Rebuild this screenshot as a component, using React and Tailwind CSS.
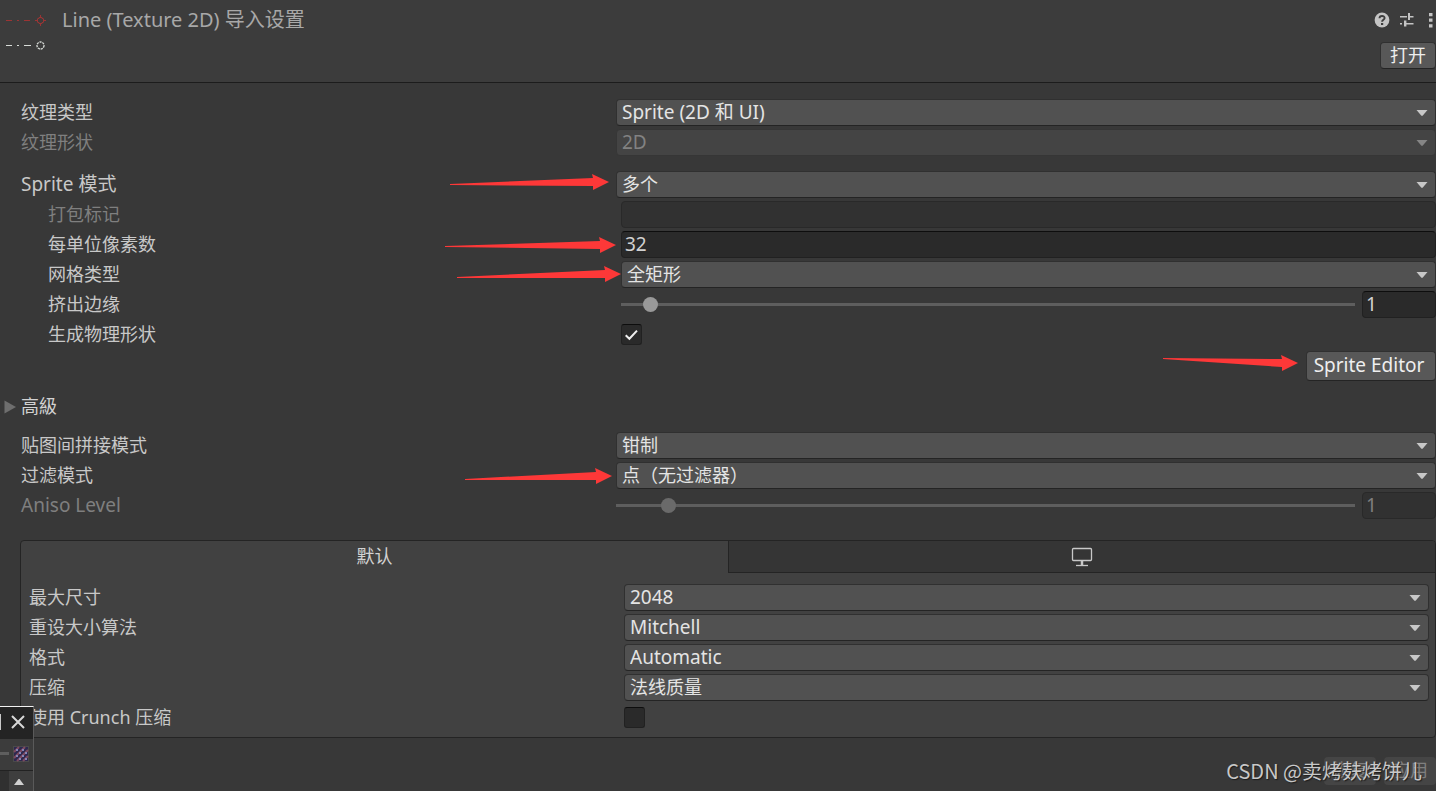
import React, { useId } from "react";

const BOX = "h-[27px] rounded-[4px] border leading-6";

// Strings that open with Latin letters or digits are set slightly larger.
function textSize(text) {
  return /^[\x20-\x7e]/.test(text) ? "text-[19px] " : "text-[18px] ";
}

function Caret({ dim }) {
  return (
    <svg
      viewBox="0 0 12 6"
      className={
        "pointer-events-none mr-2 h-[6px] w-3 self-center justify-self-end [grid-area:1/1] " +
        (dim ? "fill-[#858585]" : "fill-[#c8c8c8]")
      }
      aria-hidden="true"
    >
      <path d="M0.5 0h11L6.6 5.7H5.4z" />
    </svg>
  );
}

function Dropdown({ id, value, disabled }) {
  return (
    <div className="grid min-w-0 flex-1">
      <select
        id={id}
        disabled={disabled}
        className={
          BOX +
          " w-full min-w-0 appearance-none pb-[2px] pl-[5px] pr-6 opacity-100 outline-none [grid-area:1/1] " +
          textSize(value) +
          (disabled
            ? "border-[#363636] bg-[#444444] text-[#828282]"
            : "border-[#303030] border-b-[#242424] bg-[#515151] text-[#e4e4e4]")
        }
      >
        <option>{value}</option>
      </select>
      <Caret dim={disabled} />
    </div>
  );
}

function Field({ id, value = "", disabled, label, narrow }) {
  return (
    <input
      id={id}
      type="text"
      aria-label={label}
      defaultValue={value}
      disabled={disabled}
      className={
        BOX +
        " min-w-0 pb-[2px] pl-[3px] text-[19px] outline-none " +
        (narrow ? "w-[74px] " : "flex-1 ") +
        (disabled
          ? "border-[#292929] bg-[#313131] text-[#7f7f7f]"
          : "border-[#212121] border-t-[#0d0d0d] bg-[#2a2a2a] text-[#d2d2d2]")
      }
    />
  );
}

function SliderField({ id, max, disabled }) {
  return (
    <div className="flex min-w-0 flex-1 items-center gap-[7px]">
      <input
        id={id}
        type="range"
        min="0"
        max={max}
        defaultValue="1"
        disabled={disabled}
        className={
          "h-[15px] min-w-0 flex-1 appearance-none bg-transparent [&::-webkit-slider-runnable-track]:h-[3px] [&::-webkit-slider-runnable-track]:bg-[#5e5e5e] [&::-webkit-slider-thumb]:-mt-[6px] [&::-webkit-slider-thumb]:size-[15px] [&::-webkit-slider-thumb]:appearance-none [&::-webkit-slider-thumb]:rounded-full " +
          (disabled
            ? "[&::-webkit-slider-thumb]:bg-[#6a6a6a]"
            : "[&::-webkit-slider-thumb]:bg-[#999999]")
        }
      />
      <Field value="1" disabled={disabled} label="数值" narrow />
    </div>
  );
}

function Check({ id, checked }) {
  return (
    <span className="grid size-[21px]">
      <input
        id={id}
        type="checkbox"
        defaultChecked={checked}
        className="peer size-[21px] appearance-none rounded-[3px] border border-[#212121] border-t-[#0d0d0d] bg-[#2a2a2a] [grid-area:1/1]"
      />
      <svg
        viewBox="0 0 21 21"
        className="pointer-events-none hidden size-[21px] fill-none stroke-[#eeeeee] stroke-2 [grid-area:1/1] peer-checked:block"
        aria-hidden="true"
      >
        <path d="M4.7 11.2L8.4 14.8L16 6.6" />
      </svg>
    </span>
  );
}

function Arrow({ width, tail, tip }) {
  const neck = width - 16;
  return (
    <svg width={width} height="27" className="shrink-0 fill-[#fd3838]" aria-hidden="true">
      <path
        d={`M0 ${tail}L${neck} ${tip - 4}L${neck - 1} ${tip - 8}L${width} ${tip}L${neck} ${tip + 8}V${tip + 4}L0 ${tail + 1}z`}
      />
    </svg>
  );
}

function Row({ label, indent, inner, inset, dim, arrow, children }) {
  const id = useId();
  return (
    <div className="flex h-[27px] items-center">
      <div
        className={
          "flex h-[27px] shrink-0 items-center justify-between " +
          (inner ? "w-[603px] pl-2 " : inset ? "w-[621px] " : "w-[616px] ") +
          (inner ? "" : indent ? "pl-12" : "pl-[21px]")
        }
      >
        <label
          htmlFor={id}
          className={textSize(label) + "pb-[2px] " + (dim ? "text-[#7f7f7f]" : "text-[#c8c8c8]")}
        >
          {label}
        </label>
        {arrow}
      </div>
      {React.cloneElement(children, { id })}
    </div>
  );
}

function Header() {
  return (
    <header className="flex h-[83px] items-start border-b border-[#1c1c1c] bg-[#3c3c3c]">
      <svg width="50" height="60" className="shrink-0 fill-none" aria-hidden="true">
        <g stroke="#9b3434">
          <path d="M6 20.5h6M17 20.5h2M24 20.5h6" />
          <path d="M38 18.5h1v-1h3v1h1M38 22.5h1v1h3v-1h1M37.500 18.500v4M43.500 18.500v4M40.500 15v2M40.500 24v2M35 20.500h2M44 20.500h2" />
        </g>
        <g stroke="#d8dcd8">
          <path d="M6 45.500h6M17 45.500h2M24 45.500h7" />
          <circle cx="40.500" cy="45.500" r="3.500" strokeDasharray="2.200 0.800" strokeWidth="1.400" />
        </g>
      </svg>
      <h1 className="ml-3 mt-1 flex-1 text-[20px] leading-8 text-[#a8a8a8]">
        Line (Texture 2D) 导入设置
      </h1>
      <div className="flex flex-col items-end">
        <div className="flex h-[42px] items-center gap-[9px] pb-[2px]">
          <button aria-label="帮助">
            <svg viewBox="0 0 16 16" className="size-4">
              <circle cx="8" cy="8" r="7.400" fill="#c4c4c4" />
              <path d="M5.500 6.300C5.500 3.200 10.600 3.200 10.600 6.100C10.600 7.800 8.100 7.900 8.100 9.800" fill="none" stroke="#3c3c3c" strokeWidth="1.900" />
              <path d="M7 11h2.200v2H7z" fill="#3c3c3c" />
            </svg>
          </button>
          <button aria-label="预设">
            <svg viewBox="0 0 16 16" className="size-4 fill-[#c4c4c4]">
              <path d="M1 4h7v1.400H1zM9 1h2v7H9zM11 4h3.500v1.400H11zM1 11h2v1.400H1zM5 8.500h2.400v6H5zM7 11h7.500v1.400H7z" />
            </svg>
          </button>
          <button aria-label="更多">
            <svg viewBox="0 0 12 16" className="h-4 w-3 fill-[#c4c4c4]">
              <path d="M5 1h3.500v3.200H5zM5 6.600h3.500v3.200H5zM5 12.200h3.500v3.200H5z" />
            </svg>
          </button>
        </div>
        <button className="h-[27px] w-14 rounded-[4px] border border-[#303030] border-b-[#242424] bg-[#585858] pb-[2px] text-[18px] leading-6 text-[#eeeeee]">
          打开
        </button>
      </div>
    </header>
  );
}

function DockedWindow() {
  return (
    <aside className="absolute bottom-0 left-0 flex h-[85px] w-[34px] flex-col border-r border-t border-r-[#5a5a5a] border-t-[#f2f2f2] bg-[#3c3c3c]">
      <div className="flex h-8 items-center justify-between bg-[#242424] pb-[2px]">
        <span className="h-4 w-px bg-[#c8c8c8]" />
        <button aria-label="关闭" className="mr-2">
          <svg viewBox="0 0 14 14" className="size-[14px] fill-none stroke-[#d8d8d8] stroke-2">
            <path d="M1 1l12 12M13 1L1 13" />
          </svg>
        </button>
      </div>
      <div className="flex h-8 items-center justify-between border-b border-[#222222] pb-[2px] pr-1">
        <span className="h-[3px] w-[9px] bg-[#5e5e5e]" />
        <svg viewBox="0 0 16 16" className="size-4" aria-hidden="true">
          <path d="M0 0h16v16H0z" fill="#4a4a4a" />
          <path d="M1 1h14v14H1z" fill="#2d2850" />
          <path d="M1 6L6 1M1 12L12 1M4 15L15 4M10 15L15 10" stroke="#7d4a60" strokeWidth="2" />
          <path d="M3 3h2v2H3zM9 3h2v2H9zM6 6h2v2H6zM12 6h2v2h-2zM3 9h2v2H3zM9 9h2v2H9zM6 12h2v2H6zM12 12h2v2h-2z" fill="#8583b4" />
        </svg>
      </div>
      <div className="flex flex-1 bg-[#303030] pl-[9px]">
        <span className="flex flex-1 items-center justify-center bg-[#3e3e3e] pr-1">
          <svg viewBox="0 0 10 6" className="mt-[2px] h-[6px] w-[10px] fill-[#d0d0d0]" aria-hidden="true">
            <path d="M0 6L4.500 0h1L10 6z" />
          </svg>
        </span>
      </div>
    </aside>
  );
}

export default function App() {
  return (
    <div className="relative min-h-screen overflow-hidden bg-[#383838] font-['Noto_Sans','Noto_Sans_CJK_SC',sans-serif] text-[18px] leading-6">
      <Header />
      <main className="pt-4">
        <section className="flex flex-col gap-[3px]">
          <Row label="纹理类型"><Dropdown value="Sprite (2D 和 UI)" /></Row>
          <Row label="纹理形状" dim><Dropdown value="2D" disabled /></Row>
        </section>

        <section className="mt-[15px] flex flex-col gap-[3px]">
          <Row
            label="Sprite 模式"
            arrow={<span className="pr-[7px]"><Arrow width={159} tail={13} tip={11} /></span>}
          >
            <Dropdown value="多个" />
          </Row>
          <Row label="打包标记" indent inset dim><Field disabled /></Row>
          <Row
            label="每单位像素数"
            indent
            inset
            arrow={<span className="pr-[5px]"><Arrow width={171} tail={15} tip={14} /></span>}
          >
            <Field value="32" />
          </Row>
          <Row label="网格类型" indent inset arrow={<Arrow width={164} tail={16} tip={13} />}>
            <Dropdown value="全矩形" />
          </Row>
          <Row label="挤出边缘" indent inset><SliderField max="32" /></Row>
          <Row label="生成物理形状" indent inset><Check checked /></Row>
          <div className="flex h-[30px] items-start justify-end gap-2">
            <Arrow width={135} tail={7} tip={12} />
            <button className="h-[30px] w-[130px] rounded-[4px] border border-[#303030] border-b-[#242424] bg-[#585858] pb-[3px] pr-1 text-[19px] leading-6 text-[#eeeeee]">
              Sprite Editor
            </button>
          </div>
        </section>

        <button className="mt-3 flex h-[27px] items-center gap-[5px] pl-1 text-[#d2d2d2]">
          <svg viewBox="0 0 12 14" className="h-[14px] w-3 fill-[#6e6e6e]" aria-hidden="true">
            <path d="M0.500 0.500L12 7L0.500 13.500z" />
          </svg>
          <span className="pb-[2px]">高級</span>
        </button>

        <section className="mt-3 flex flex-col gap-[3px]">
          <Row label="贴图间拼接模式"><Dropdown value="钳制" /></Row>
          <Row
            label="过滤模式"
            arrow={<span className="pr-1"><Arrow width={147} tail={17} tip={14} /></span>}
          >
            <Dropdown value="点（无过滤器）" />
          </Row>
          <Row label="Aniso Level" dim><SliderField max="16" disabled /></Row>
        </section>

        <section className="ml-5 mt-[21px] rounded-[4px] border border-[#242424] bg-[#414141] pb-[6px]">
          <div className="grid h-8 grid-cols-2" role="tablist">
            <button role="tab" aria-selected="true" className="pb-[2px] text-[#d2d2d2]">默认</button>
            <button
              role="tab"
              aria-selected="false"
              aria-label="桌面平台"
              className="flex items-center justify-center rounded-tr-[3px] border-b border-l border-[#242424] bg-[#353535]"
            >
              <svg viewBox="0 0 22 20" className="h-5 w-[22px] fill-none stroke-[#c8c8c8]" aria-hidden="true">
                <rect x="1.500" y="1.500" width="19" height="12" rx="1" strokeWidth="1.300" />
                <path d="M11 14v4" strokeWidth="2.500" />
                <path d="M5 18.500h12" strokeWidth="1.300" />
              </svg>
            </button>
          </div>
          <div className="mt-[11px] flex flex-col gap-[3px] pr-[6px]">
            <Row label="最大尺寸" inner><Dropdown value="2048" /></Row>
            <Row label="重设大小算法" inner><Dropdown value="Mitchell" /></Row>
            <Row label="格式" inner><Dropdown value="Automatic" /></Row>
            <Row label="压缩" inner><Dropdown value="法线质量" /></Row>
            <Row label="使用 Crunch 压缩" inner><Check /></Row>
          </div>
        </section>

        <footer className="mt-[19px] flex justify-end gap-2">
          <button disabled className="h-7 w-[52px] rounded-[4px] bg-[#454545] pb-[2px] text-[#7f7f7f]">恢复</button>
          <button disabled className="h-7 w-[52px] rounded-[4px] bg-[#454545] pb-[2px] text-[#7f7f7f]">应用</button>
        </footer>
      </main>

      <DockedWindow />
      <p className="pointer-events-none absolute bottom-2 right-[14px] font-['Noto_Sans_CJK_SC',sans-serif] text-[20px] leading-6 text-[#c8c8c8] [text-shadow:1px_1px_1px_#1c1c1c]">
        CSDN @卖烤麸烤饼儿
      </p>
    </div>
  );
}
